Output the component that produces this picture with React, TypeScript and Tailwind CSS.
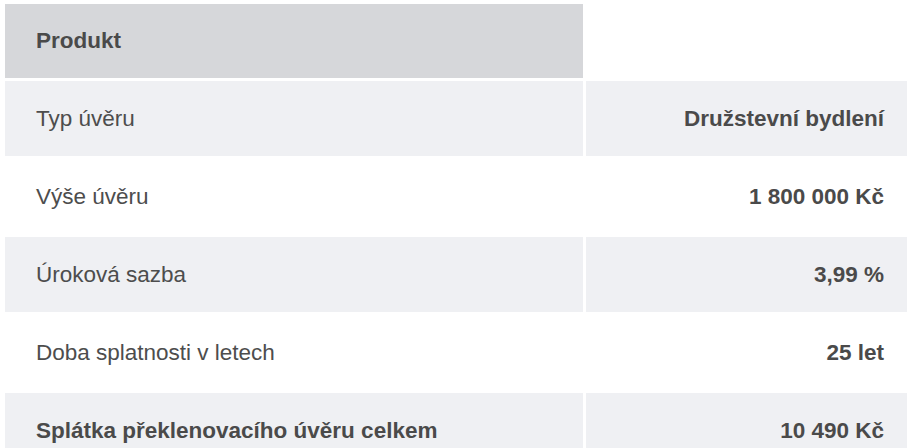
import React from "react";

const rows: { label: string; value: string; boldLabel?: boolean }[] = [
  { label: "Typ úvěru", value: "Družstevní bydlení" },
  { label: "Výše úvěru", value: "1 800 000 Kč" },
  { label: "Úroková sazba", value: "3,99 %" },
  { label: "Doba splatnosti v letech", value: "25 let" },
  { label: "Splátka překlenovacího úvěru celkem", value: "10 490 Kč", boldLabel: true },
];

export default function App() {
  return (
    <div className="w-[907px] h-[448px] overflow-hidden bg-white pl-[2px] pt-px" style={{ fontFamily: '"Liberation Sans", Arial, sans-serif' }}>
      <table className="border-separate border-spacing-[3px] w-[916px] text-[22.5px] text-[#4d4d4d]">
        <thead>
          <tr>
            <th className="h-[74px] w-[578px] bg-[#d6d7da] text-left font-bold pl-[31px] text-[#4a4a4a]">Produkt</th>
            <th className="bg-white"></th>
          </tr>
        </thead>
        <tbody>
          {rows.map((r, i) => (
            <tr key={i} className={i % 2 === 0 ? "bg-[#eff0f3]" : "bg-white"}>
              <td className={`h-[75px] pl-[31px] ${r.boldLabel ? "font-bold text-[#4a4a4a]" : ""}`}>{r.label}</td>
              <td className="h-[75px] text-right pr-[31px] font-bold text-[#4a4a4a]">{r.value}</td>
            </tr>
          ))}
        </tbody>
      </table>
    </div>
  );
}
